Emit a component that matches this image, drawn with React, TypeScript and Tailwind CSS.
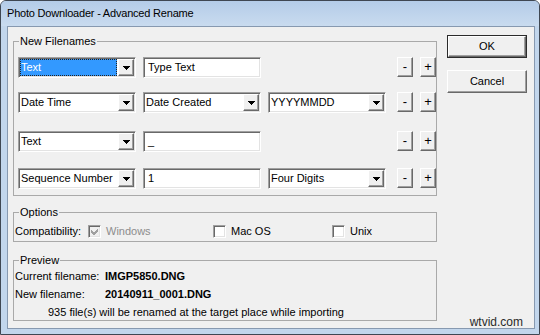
const FONT = "font-['Liberation_Sans',Arial,sans-serif]";

const SUNKEN =
  "border border-t-[#a0a0a0] border-l-[#a0a0a0] border-r-white border-b-white shadow-[inset_1px_1px_0_#696969,inset_-1px_-1px_0_#e3e3e3]";
const RAISED =
  "border border-t-white border-l-white border-r-[#696969] border-b-[#696969] shadow-[inset_-1px_-1px_0_#a0a0a0] bg-[#f0f0f0]";

function Arrow() {
  return (
    <div className={`flex h-full w-[16px] items-center justify-center ${RAISED}`}>
      <svg width="7" height="4" viewBox="0 0 7 4" shapeRendering="crispEdges">
        <rect x="0" y="0" width="7" height="1" fill="#000" />
        <rect x="1" y="1" width="5" height="1" fill="#000" />
        <rect x="2" y="2" width="3" height="1" fill="#000" />
        <rect x="3" y="3" width="1" height="1" fill="#000" />
      </svg>
    </div>
  );
}

function Combo({ value, focused }: { value: string; focused?: boolean }) {
  return (
    <div className={`flex h-[21px] w-[118px] bg-white p-[1px] ${SUNKEN}`}>
      <div className="flex flex-1 items-center pr-[1px]">
        {focused ? (
          <div className="flex h-full w-full items-center bg-[#3399ff] pl-[1px] text-white outline-1 -outline-offset-1 outline-dotted outline-[#222]">
            {value}
          </div>
        ) : (
          <span className="pl-[1px]">{value}</span>
        )}
      </div>
      <Arrow />
    </div>
  );
}

function Field({ value }: { value: string }) {
  return (
    <div className={`flex h-[21px] w-[118px] items-center bg-white pl-[4px] ${SUNKEN}`}>
      {value}
    </div>
  );
}

function PlusMinus() {
  return (
    <div className="ml-auto flex gap-[7px] text-[13px]">
      <div className={`flex h-[20px] w-[16px] items-center justify-center ${RAISED}`}>-</div>
      <div className={`flex h-[20px] w-[16px] items-center justify-center ${RAISED}`}>+</div>
    </div>
  );
}

function Check({ label, checked, disabled, width }: { label: string; checked?: boolean; disabled?: boolean; width?: string }) {
  return (
    <div className={`flex items-center ${width ?? ""}`}>
      <div className={`flex h-[13px] w-[13px] items-center justify-center ${disabled ? "bg-[#f0f0f0]" : "bg-white"} ${SUNKEN}`}>
        {checked && (
          <svg width="7" height="7" viewBox="0 0 7 7" shapeRendering="crispEdges">
            <path d="M0 2v3l2 2h1l4-4V0L2.5 4.5z" fill={disabled ? "#a0a0a0" : "#000"} />
          </svg>
        )}
      </div>
      <span className={`ml-[5px] ${disabled ? "text-[#8d8d8d]" : ""}`}>{label}</span>
    </div>
  );
}

function Group({ title, className, children }: { title: string; className?: string; children: React.ReactNode }) {
  return (
    <fieldset className={`w-[424px] border border-[#a9a9a9] ${className ?? ""}`}>
      <legend className="ml-[5px] px-[1px] leading-[13px]">{title}</legend>
      {children}
    </fieldset>
  );
}

function Button({ label, isDefault }: { label: string; isDefault?: boolean }) {
  if (isDefault) {
    return (
      <div className="h-[23px] w-[80px] border border-[#2b2b2b]">
        <div className={`flex h-full w-full items-center justify-center ${RAISED}`}>{label}</div>
      </div>
    );
  }
  return <div className={`flex h-[23px] w-[80px] items-center justify-center ${RAISED}`}>{label}</div>;
}

export default function App() {
  return (
    <div className={`relative flex h-[335px] w-[540px] flex-col overflow-hidden rounded-t-[6px] border border-[#3f4752] bg-[#c2d6ec] text-[11px] text-black ${FONT}`}>
      <div className="flex h-[25px] items-center bg-gradient-to-b from-[#b4cce8] to-[#c9dbef] pl-[6px] text-[11px] tracking-[-0.2px]">
        Photo Downloader - Advanced Rename
      </div>
      <div className="mb-[5px] ml-[6px] mr-[4px] flex-1 border border-[#8799b0]">
        <div className="flex h-full bg-[#f0f0f0] pl-[5px]">
          <div className="flex flex-col">
            <Group title="New Filenames" className="mt-[8px]">
              <div className="pb-[6px] pl-[4px] pt-[9px]">
                <div className="flex items-start gap-[7px]">
                  <Combo value="Text" focused />
                  <Field value="Type Text" />
                  <PlusMinus />
                </div>
                <div className="mt-[14px] flex items-start gap-[7px]">
                  <Combo value="Date Time" />
                  <Combo value="Date Created" />
                  <Combo value="YYYYMMDD" />
                  <PlusMinus />
                </div>
                <div className="mt-[18px] flex items-start gap-[7px]">
                  <Combo value="Text" />
                  <Field value="_" />
                  <PlusMinus />
                </div>
                <div className="mt-[16px] flex items-start gap-[7px]">
                  <Combo value="Sequence Number" />
                  <Field value="1" />
                  <Combo value="Four Digits" />
                  <PlusMinus />
                </div>
              </div>
            </Group>

            <Group title="Options" className="mt-[10px]">
              <div className="mb-[1px] mt-[5px] flex h-[16px] items-center pb-[1px] pl-[1px]">
                <span className="w-[73px]">Compatibility:</span>
                <Check label="Windows" checked disabled width="w-[125px]" />
                <Check label="Mac OS" width="w-[119px]" />
                <Check label="Unix" />
              </div>
            </Group>

            <Group title="Preview" className="mt-[12px]">
              <div className="pl-[1px]">
                <div className="flex h-[18px] items-center">
                  <span className="w-[90px]">Current filename:</span>
                  <span className="font-bold">IMGP5850.DNG</span>
                </div>
                <div className="flex h-[19px] items-center">
                  <span className="w-[90px]">New filename:</span>
                  <span className="font-bold">20140911_0001.DNG</span>
                </div>
                <div className="flex h-[16px] items-center pl-[33px]">
                  935 file(s) will be renamed at the target place while importing
                </div>
              </div>
            </Group>
          </div>

          <div className="ml-[10px] flex flex-col gap-[12px] pt-[8px]">
            <Button label="OK" isDefault />
            <Button label="Cancel" />
          </div>
        </div>
      </div>
      <div className="absolute bottom-[5px] right-[16px] text-[12px] leading-[14px] text-[#2a2a2a]">wtvid.com</div>
    </div>
  );
}
